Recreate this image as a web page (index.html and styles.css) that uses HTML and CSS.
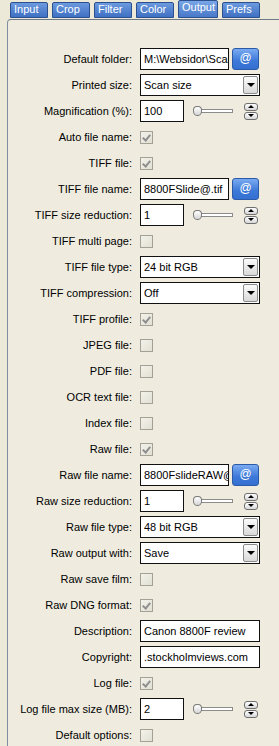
FILE: index.html
```html
<!DOCTYPE html>
<html lang="en">
<head>
  <meta charset="UTF-8">
  <title>Output</title>
  <link rel="stylesheet" href="styles.css">
</head>
<body>
  <div class="tabs">
    <div class="tab">Input</div>
    <div class="tab">Crop</div>
    <div class="tab">Filter</div>
    <div class="tab">Color</div>
    <div class="tab on">Output</div>
    <div class="tab">Prefs</div>
  </div>

  <div class="panel">
    <div class="form">
      <label>Default folder:</label>
      <div class="ctl"><span class="box w89">M:\Websidor\Scanners\</span><span class="at">@</span></div>

      <label>Printed size:</label>
      <div class="ctl"><span class="box sel">Scan size<span class="drop"></span></span></div>

      <label>Magnification (%):</label>
      <div class="ctl"><span class="box w44">100</span><span class="slider"><span class="knob"></span></span><span class="spin"><span></span><span class="dn"></span></span></div>

      <label>Auto file name:</label>
      <div class="ctl"><span class="chk on"></span></div>

      <label>TIFF file:</label>
      <div class="ctl"><span class="chk on"></span></div>

      <label>TIFF file name:</label>
      <div class="ctl"><span class="box w89">8800FSlide@.tif</span><span class="at">@</span></div>

      <label>TIFF size reduction:</label>
      <div class="ctl"><span class="box w44">1</span><span class="slider"><span class="knob"></span></span><span class="spin"><span></span><span class="dn"></span></span></div>

      <label>TIFF multi page:</label>
      <div class="ctl"><span class="chk"></span></div>

      <label>TIFF file type:</label>
      <div class="ctl"><span class="box sel">24 bit RGB<span class="drop"></span></span></div>

      <label>TIFF compression:</label>
      <div class="ctl"><span class="box sel">Off<span class="drop"></span></span></div>

      <label>TIFF profile:</label>
      <div class="ctl"><span class="chk on"></span></div>

      <label>JPEG file:</label>
      <div class="ctl"><span class="chk"></span></div>

      <label>PDF file:</label>
      <div class="ctl"><span class="chk"></span></div>

      <label>OCR text file:</label>
      <div class="ctl"><span class="chk"></span></div>

      <label>Index file:</label>
      <div class="ctl"><span class="chk"></span></div>

      <label>Raw file:</label>
      <div class="ctl"><span class="chk on"></span></div>

      <label>Raw file name:</label>
      <div class="ctl"><span class="box w89">8800FslideRAW@.tif</span><span class="at">@</span></div>

      <label>Raw size reduction:</label>
      <div class="ctl"><span class="box w44">1</span><span class="slider"><span class="knob"></span></span><span class="spin"><span></span><span class="dn"></span></span></div>

      <label>Raw file type:</label>
      <div class="ctl"><span class="box sel">48 bit RGB<span class="drop"></span></span></div>

      <label>Raw output with:</label>
      <div class="ctl"><span class="box sel">Save<span class="drop"></span></span></div>

      <label>Raw save film:</label>
      <div class="ctl"><span class="chk"></span></div>

      <label>Raw DNG format:</label>
      <div class="ctl"><span class="chk on"></span></div>

      <label>Description:</label>
      <div class="ctl"><span class="box w120">Canon 8800F review</span></div>

      <label>Copyright:</label>
      <div class="ctl"><span class="box w120">.stockholmviews.com</span></div>

      <label>Log file:</label>
      <div class="ctl"><span class="chk on"></span></div>

      <label>Log file max size (MB):</label>
      <div class="ctl"><span class="box w44">2</span><span class="slider"><span class="knob"></span></span><span class="spin"><span></span><span class="dn"></span></span></div>

      <label>Default options:</label>
      <div class="ctl"><span class="chk"></span></div>
    </div>
  </div>
</body>
</html>
```

FILE: styles.css
```css
body {
  margin: 0;
  height: 746px;
  overflow: hidden;
  background: #ece9d8;
  font-family: "Liberation Sans", Arial, sans-serif;
  font-size: 11px;
  color: #000;
}

/* tabs */
.tabs {
  display: flex;
  align-items: flex-end;
  gap: 4px;
  height: 18px;
  padding-left: 10px;
  margin-bottom: 1px;
}
.tab {
  box-sizing: border-box;
  width: 38px;
  height: 16px;
  padding-left: 3px;
  line-height: 13px;
  color: #fff;
  border: 1px solid #2b4f8f;
  border-radius: 2px 2px 0 0;
  background: linear-gradient(#6c9ade, #3f70c3);
}
.tab.on {
  width: 40px;
  height: 18px;
  line-height: 12px;
  background: linear-gradient(#79a6e6, #4878c8);
}

/* panel */
.panel {
  margin-left: 7px;
  height: 760px;
  border-left: 1px solid #7f8fa0;
  border-top: 1px solid #6f7a86;
  border-top-left-radius: 4px;
  background: #efecdf;
  padding-top: 26px;
}
.form {
  display: grid;
  grid-template-columns: 124px auto;
  column-gap: 8px;
  grid-auto-rows: 26px;
  align-items: center;
}
.form label {
  text-align: right;
  white-space: nowrap;
}
.ctl {
  display: flex;
  align-items: center;
}

/* text boxes */
.box {
  box-sizing: border-box;
  display: flex;
  align-items: center;
  height: 22px;
  padding-left: 3px;
  background: #fff;
  border: 1px solid #111;
  white-space: nowrap;
  overflow: hidden;
}
.w44 { width: 44px; }
.w89 { width: 89px; }
.w120 { width: 120px; }

.sel {
  width: 120px;
  padding-right: 1px;
  justify-content: space-between;
}
.drop {
  box-sizing: border-box;
  flex: none;
  width: 15px;
  height: 18px;
  border: 1px solid #8a8a8a;
  border-radius: 2px;
  background: linear-gradient(#fbfbfb, #d9d9d9);
  display: flex;
  align-items: center;
  justify-content: center;
}
.drop::after {
  content: "";
  border-left: 4px solid transparent;
  border-right: 4px solid transparent;
  border-top: 4px solid #000;
}

.at {
  box-sizing: border-box;
  width: 27px;
  height: 22px;
  margin-left: 3px;
  border: 1px solid #2a5aa8;
  border-radius: 3px;
  background: linear-gradient(#7aaaf0, #3c78d8 60%, #3570d0);
  color: #fff;
  font-size: 12px;
  text-align: center;
  line-height: 19px;
}

/* slider */
.slider {
  position: relative;
  width: 40px;
  height: 12px;
  margin-left: 9px;
}
.slider::before {
  content: "";
  position: absolute;
  left: 5px;
  right: 0;
  top: 4px;
  height: 2px;
  border: 1px solid #8b8b8b;
  background: #fff;
}
.knob {
  position: absolute;
  left: 0;
  top: 1px;
  width: 7px;
  height: 8px;
  border: 1px solid #7a7a7a;
  border-radius: 4px 4px 4px 4px / 4px 4px 5px 5px;
  background: linear-gradient(#ffffff, #d6d6d6);
}

/* spinner */
.spin {
  display: flex;
  flex-direction: column;
  gap: 1px;
  margin-left: 11px;
}
.spin span {
  box-sizing: border-box;
  width: 14px;
  height: 8px;
  border: 1px solid #6f6f6f;
  border-radius: 3px;
  background: linear-gradient(#fdfdfd, #d8d8d8);
  display: flex;
  align-items: center;
  justify-content: center;
}
.spin span::after {
  content: "";
  border-left: 3px solid transparent;
  border-right: 3px solid transparent;
  border-bottom: 3px solid #000;
}
.spin span.dn::after {
  border-bottom: 0;
  border-top: 3px solid #000;
}

/* checkboxes */
.chk {
  box-sizing: border-box;
  width: 13px;
  height: 13px;
  border: 1px solid #a3a195;
  background: linear-gradient(135deg, #f3f2ea, #e2e0d4);
  position: relative;
}
.chk.on::after {
  content: "";
  position: absolute;
  left: 3px;
  top: 1px;
  width: 3px;
  height: 6px;
  border-right: 2px solid #8f8f8f;
  border-bottom: 2px solid #8f8f8f;
  transform: rotate(40deg);
}
```
